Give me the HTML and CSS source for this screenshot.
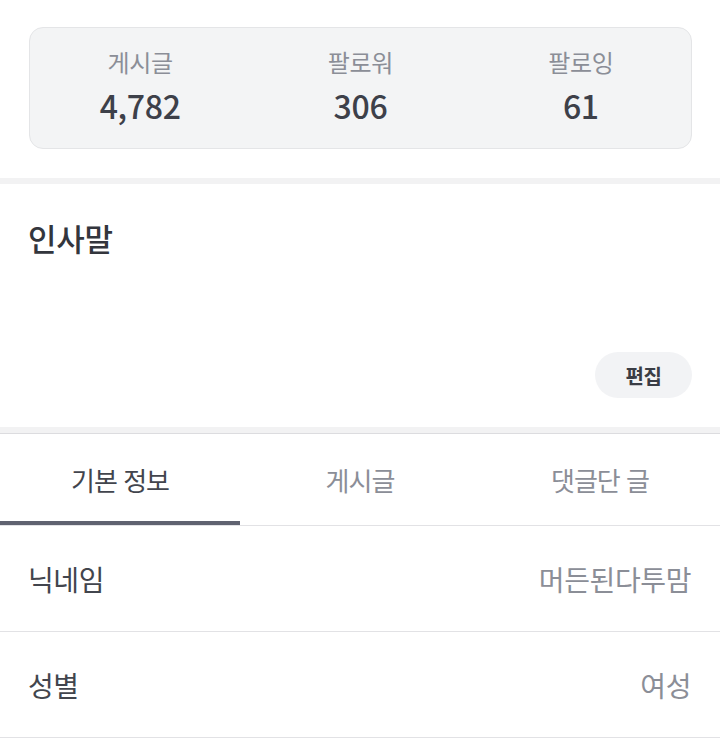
FILE: index.html
```html
<!DOCTYPE html>
<html lang="ko">
<head>
<meta charset="utf-8">
<link rel="stylesheet" href="styles.css">
</head>
<body>
<section class="stats-wrap">
  <div class="stats">
    <div class="stat"><span class="stat-label">게시글</span><span class="stat-num">4,782</span></div>
    <div class="stat"><span class="stat-label">팔로워</span><span class="stat-num">306</span></div>
    <div class="stat"><span class="stat-label">팔로잉</span><span class="stat-num">61</span></div>
  </div>
</section>
<section class="greeting">
  <h2 class="greeting-title">인사말</h2>
  <div class="greeting-actions"><button class="edit-btn">편집</button></div>
</section>
<nav class="tabs">
  <div class="tab active">기본 정보</div>
  <div class="tab">게시글</div>
  <div class="tab">댓글단 글</div>
</nav>
<div class="info-row"><span class="info-label">닉네임</span><span class="info-value">머든된다투맘</span></div>
<div class="info-row"><span class="info-label">성별</span><span class="info-value">여성</span></div>
</body>
</html>
```
FILE: styles.css
```css
* { box-sizing: border-box; }
html, body { margin: 0; padding: 0; background: #fff; }
body {
  font-family: "Noto Sans CJK KR", "Noto Sans", sans-serif;
  width: 720px;
  overflow: hidden;
}
.stats-wrap {
  padding: 27px 28px 29px 29px;
  border-bottom: 6px solid #f2f2f3;
}
.stats {
  display: grid;
  grid-template-columns: 1fr 1fr 1fr;
  height: 122px;
  background: #f3f4f5;
  border: 1px solid #e4e5e7;
  border-radius: 14px;
  padding-top: 16px;
}
.stat {
  display: flex;
  flex-direction: column;
  align-items: center;
}
.stat-label {
  font-size: 24px;
  line-height: 36px;
  color: #8b8e97;
  letter-spacing: -0.3px;
}
.stat-num {
  font-size: 32px;
  line-height: 40px;
  margin-top: 5px;
  font-weight: 500;
  color: #3d4049;
  letter-spacing: -0.3px;
}
.greeting {
  padding: 34px 28px 29px 28px;
  border-bottom: 6px solid #f2f2f3;
}
.greeting-title {
  margin: 0;
  font-size: 31px;
  line-height: 40px;
  font-weight: 500;
  color: #33363d;
  letter-spacing: -0.3px;
}
.greeting-actions {
  display: flex;
  justify-content: flex-end;
  margin-top: 94px;
}
.edit-btn {
  font-family: inherit;
  width: 97px;
  height: 46px;
  border: none;
  border-radius: 23px;
  background: #f2f3f5;
  font-size: 20px;
  font-weight: 700;
  color: #3a3d45;
  letter-spacing: -0.3px;
  padding: 0;
}
.tabs {
  display: grid;
  grid-template-columns: 1fr 1fr 1fr;
  border-top: 1px solid #dcdcdf;
  border-bottom: 1px solid #e2e2e5;
}
.tab {
  height: 91px;
  display: flex;
  align-items: center;
  justify-content: center;
  font-size: 26px;
  color: #8b8e97;
  letter-spacing: -1px;
  border-bottom: 4px solid transparent;
  padding-top: 4px;
}
.tab.active {
  color: #42454d;
  border-bottom-color: #5f6270;
}
.info-row {
  height: 106px;
  display: flex;
  align-items: center;
  justify-content: space-between;
  padding: 0 29px 0 28px;
  border-bottom: 1px solid #e2e2e5;
  font-size: 28px;
  letter-spacing: -0.4px;
}
.info-label { color: #42454d; }
.info-value { color: #8b8e97; }
```
